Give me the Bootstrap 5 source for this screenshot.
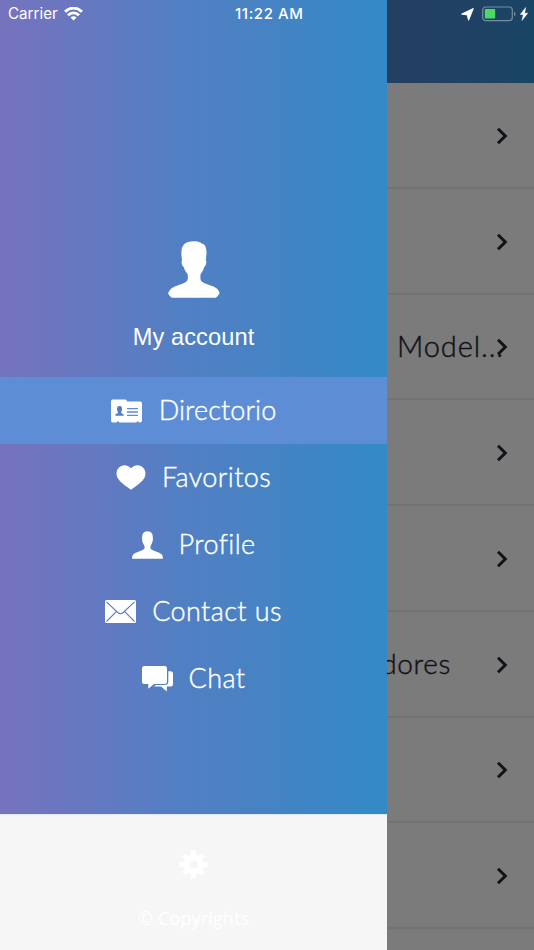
<!DOCTYPE html>
<html lang="es">
<head>
<meta charset="utf-8">
<meta name="viewport" content="width=device-width, initial-scale=1">
<title>Directorio</title>
<link href="https://cdn.jsdelivr.net/npm/bootstrap@5.3.0/dist/css/bootstrap.min.css" rel="stylesheet">
<style>
  body { width: 534px; height: 950px; background: #7b7b7b; font-family: Lato, "Open Sans", sans-serif; }
  .app { width: 534px; height: 950px; }
  .status { height: 28px; z-index: 5; font: 500 15.2px/28px Inter, sans-serif; padding: 0 6px 0 8px; }
  .status .carrier { font-weight: 400; letter-spacing: 0; width: 56px; white-space: nowrap; }
  .status .clock { left: 235px; letter-spacing: .6px; font-size: 15px; font-weight: 500; }
  .drawer { width: 387px; z-index: 2; background: linear-gradient(90deg, #7673bd 0, #6379c1 26%, #537fc3 45%, #4583c4 70%, #338ac8 100%); }
  .account { height: 377px; padding-top: 241px; }
  .account span { font: 23.6px/30px "Liberation Sans", sans-serif; letter-spacing: .1px; margin-top: 24px; }
  .entry { height: 67.1px; gap: 16px; font-size: 27px; font-weight: 300; line-height: 65px; letter-spacing: .4px; -webkit-text-stroke: .4px #fff; }
  .entry:first-child { gap: 17px; letter-spacing: .1px; }
  .entry span { padding-bottom: 2px; }
  .entry.current { background: #5d8dd5; }
  .foot { height: 136px; background: #f6f6f6; border-top: 1px solid #dfe8f4; padding-top: 35px; }
  .foot span { font: 400 18.3px/26px "Open Sans", sans-serif; margin-top: 26px; }
  .behind { width: 147px; color: #121219; }
  .topbar { height: 83.1px; background: linear-gradient(90deg, #243f62, #1f4264 60%, #194564) 0 0 / 100% 83px no-repeat; }
  .line { height: 105.75px; padding: 2px 26px 0 0; border-bottom: 2px solid #737373; font-size: 28px; }
  .line span { padding-bottom: 3px; font-weight: 300; -webkit-text-stroke: .45px #121219; }
  .tight { margin-right: -8px; font-size: 29px; letter-spacing: .9px; }
  .spaced { margin-right: 45px; letter-spacing: .6px; }
</style>
<script src="https://cdn.jsdelivr.net/npm/bootstrap@5.3.0/dist/js/bootstrap.bundle.min.js"></script>
</head>
<body class="m-0 overflow-hidden">
<svg class="d-none">
  <symbol id="next" viewBox="0 0 12 18"><path d="M2 1.800 9.300 9 2 16.200" fill="none" stroke="#121219" stroke-width="3"/></symbol>
</svg>
<div class="app d-flex position-relative overflow-hidden">
  <header class="status position-absolute top-0 start-0 w-100 d-flex align-items-center text-white">
    <span class="carrier">Carrier</span>
    <svg width="19" height="14" viewBox="0 0 19 14" fill="none" stroke="#fff" stroke-width="2.900"><path d="M1 4.800C6-.2 13-.2 18 4.800"/><path d="M4 8.300c3.200-3.200 7.800-3.200 11 0"/><path d="M9.500 13.500 6.500 10.500c1.700-1.600 4.300-1.600 6 0z" fill="#fff" stroke="none"/></svg>
    <span class="clock position-absolute">11:22 AM</span>
    <span class="ms-auto d-flex align-items-center">
      <svg class="me-2" width="13" height="13" viewBox="0 0 13 13" fill="#fff"><path d="M12.300.5 7.600 12.300 6.200 6.900.6 6.100z" stroke="#fff" stroke-width="1" stroke-linejoin="round"/></svg>
      <svg width="34" height="16" viewBox="0 0 34 16"><rect x=".7" y="1" width="29.600" height="13.600" rx="3" fill="none" stroke="#768da2" stroke-width="1.200"/><rect x="2.800" y="3" width="10.400" height="9.600" rx="1" fill="#4cd964"/><path d="M32 5.400q3 2.500 0 5z" fill="#768da2"/></svg>
      <svg class="ms-1" width="8" height="14" viewBox="0 0 8 14" fill="#fff"><path d="M5.700.5.3 7.500h3L2 13.500l5.700-7.300H4.600z" stroke="#fff" stroke-width=".5"/></svg>
    </span>
  </header>

  <aside class="drawer flex-shrink-0 d-flex flex-column text-white">
    <div class="account d-flex flex-column align-items-center">
      <svg width="52" height="57" viewBox="0 0 52 57" fill="#fff"><path d="M25.500.2c5.500 0 7.500 1.500 8.700 2.600 3.200.6 4.300 4.200 4.300 8.700 0 3-.6 5.200-.7 8 .9.300.6 1.800.2 3.500-.3 1.400-.8 2.600-1.900 2.900-.6 3-2.100 5.500-3.500 7.100-.3 2.600-.4 4.800.3 6.500 3 4.100 12.500 4.500 16.500 8.500 1.200 1.200 1.900 2.500 2.100 4.500-1.200 2.200-2.700 3.500-3.700 4.300h-44c-1-.8-2.500-2.100-3.700-4.300.8-2 1.500-3.300 2.700-4.500 4-4 13.500-4.400 16.500-8.500.7-1.700.6-3.900.3-6.500-1.400-1.600-3.200-4.100-3.800-7.100-1.100-.3-1.600-1.500-1.900-2.900-.4-1.700-.7-3.200.2-3.500-.5-3-.8-5-.7-8C13.400 4 17.500.2 25.500.2z"/></svg>
      <span>My account</span>
    </div>
    <nav class="flex-grow-1">
      <a class="entry current d-flex justify-content-center align-items-center text-white text-decoration-none" href="#">
        <svg width="31" height="24" viewBox="0 0 31 24"><path fill="#fff" fill-rule="evenodd" d="M1.800.5h12.400q1.600 0 1.900 2h13q1.900 0 1.900 2v17q0 1.900-1.900 1.900h-1.200v-.8h-2.200v.8H8v-.8H5.800v.8h-4Q0 23.400 0 21.500V2.300Q0 .5 1.800.5z"/><path fill="#527fbd" d="M8.500 7c2.200 0 2.700 1.700 2.500 3.300.3 1-.3 1.300-.6 2.200-.3 1 0 1.500.1 1.700 1.400.6 2.300.8 2.300 2.500H4.300c0-1.700.9-1.900 2.300-2.500.1-.2.400-.7.100-1.700-.3-.9-.9-1.200-.6-2.200C5.900 8.700 6.300 7 8.500 7z"/><path d="M16 9.700h11M16 13h11M16 16.300h11" stroke="#5d8dd5" stroke-width="1.300"/></svg>
        <span>Directorio</span></a>
      <a class="entry d-flex justify-content-center align-items-center text-white text-decoration-none" href="#">
        <svg width="30" height="25" viewBox="0 0 30 25" fill="#fff"><path d="M15 3.300C17 1 19.300.2 21.500.2 26 .2 29.500 4 29.500 8.500c0 5.500-4.800 9.500-14.500 16.300C5.300 18 .5 14 .5 8.500.5 4 4 .2 8.500.2 10.700.2 13 1 15 3.300z"/></svg>
        <span>Favoritos</span></a>
      <a class="entry d-flex justify-content-center align-items-center text-white text-decoration-none" href="#">
        <svg width="31" height="28" viewBox="0 0 31 28" fill="#fff"><path d="M15.500.2c4.200 0 5.500 3 5.400 6.800 0 2.200-.2 4.200-1.300 5.900-1.600 2.300-1.700 4.600-.1 5.700 3 1.700 7.500 2.500 9.700 4.500 1.500 1.400 1.700 2.600 1.700 4.700H.1c0-2.100.2-3.300 1.700-4.700 2.200-2 6.700-2.800 9.700-4.500 1.600-1.100 1.500-3.400-.1-5.700C10.300 11.200 10.100 9.200 10.100 7c-.1-3.800 1.200-6.800 5.400-6.800z"/></svg>
        <span>Profile</span></a>
      <a class="entry d-flex justify-content-center align-items-center text-white text-decoration-none" href="#">
        <svg width="31" height="23" viewBox="0 0 31 23"><rect width="31" height="23" rx="1.500" fill="#fff"/><path d="M1.500 1.800 12.700 12.500q2.800 2.500 5.600 0L29.500 1.800M1.500 21.500l10-10.200M29.500 21.500l-10-10.200" fill="none" stroke="#5b7cc2" stroke-width="1.100"/></svg>
        <span>Contact us</span></a>
      <a class="entry d-flex justify-content-center align-items-center text-white text-decoration-none" href="#">
        <svg width="31" height="26" viewBox="0 0 31 26" fill="#fff"><path d="M2.500 0h20Q25 0 25 2.500v13q0 2.500-2.500 2.500H12l-5.700 4.800V18H2.500Q0 18 0 15.500v-13Q0 0 2.500 0z"/><path d="M26.300 5.200h2.200Q31 5.200 31 7.700v10.200q0 2.500-2.500 2.500h-3.700v5L19 20.400h-7l1.800-1.300h9q3.500 0 3.500-3.500z"/></svg>
        <span>Chat</span></a>
    </nav>
    <footer class="foot d-flex flex-column align-items-center">
      <svg width="29" height="29" viewBox="-14.500 -14.500 29 29"><g stroke="#fff" stroke-width="5" stroke-linecap="butt"><path d="M0-14.200v28.400M-14.200 0h28.400M-9.500-9.500 9.500 9.500M-9.500 9.500 9.500-9.500"/></g><circle r="10.200" fill="#fff"/><circle r="3.900" fill="#f6f6f6"/></svg>
      <span>© Copyrights</span>
    </footer>
  </aside>

  <main class="behind flex-shrink-0 overflow-hidden">
    <div class="topbar"></div>
    <div class="line d-flex align-items-center justify-content-end"><svg width="12" height="18"><use href="#next"/></svg></div>
    <div class="line d-flex align-items-center justify-content-end"><svg width="12" height="18"><use href="#next"/></svg></div>
    <div class="line d-flex align-items-center justify-content-end text-nowrap"><span class="tight">. Model...</span><svg class="flex-shrink-0" width="12" height="18"><use href="#next"/></svg></div>
    <div class="line d-flex align-items-center justify-content-end"><svg width="12" height="18"><use href="#next"/></svg></div>
    <div class="line d-flex align-items-center justify-content-end"><svg width="12" height="18"><use href="#next"/></svg></div>
    <div class="line d-flex align-items-center justify-content-end text-nowrap"><span class="spaced">dores</span><svg class="flex-shrink-0" width="12" height="18"><use href="#next"/></svg></div>
    <div class="line d-flex align-items-center justify-content-end"><svg width="12" height="18"><use href="#next"/></svg></div>
    <div class="line d-flex align-items-center justify-content-end"><svg width="12" height="18"><use href="#next"/></svg></div>
  </main>
</div>
</body>
</html>
